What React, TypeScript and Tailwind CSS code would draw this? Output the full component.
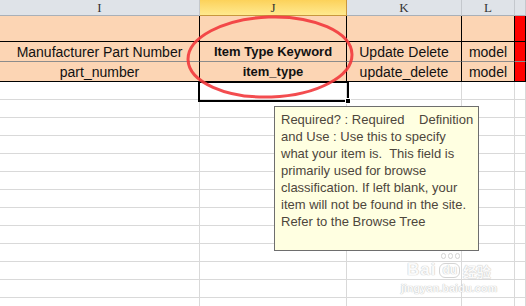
import React from 'react'

const cols = ['I', 'J', 'K', 'L', '']
const colW = ['w-[200px]', 'w-[147px]', 'w-[115px]', 'w-[53px]', 'w-[11px]']

const dataRows = [
  ['Manufacturer Part Number', 'Item Type Keyword', 'Update Delete', 'model'],
  ['part_number', 'item_type', 'update_delete', 'model'],
]

const tipLines = [
  'Required? : Required\u00a0\u00a0\u00a0 Definition',
  'and Use : Use this to specify',
  'what your item is.\u00a0 This field is',
  'primarily used for browse',
  'classification. If left blank, your',
  'item will not be found in the site.',
  'Refer to the Browse Tree',
]

export default function App() {
  return (
    <div className="relative w-[526px] h-[306px] overflow-hidden bg-white font-['Liberation_Sans',sans-serif]">
      {/* column headers */}
      <div className="flex h-[16px]">
        {cols.map((c, i) => (
          <div
            key={i}
            className={
              colW[i] +
              ' shrink-0 flex items-center justify-center text-[13px] text-[#333] font-["Liberation_Serif",serif] border-b ' +
              (i === 1
                ? 'bg-gradient-to-b from-[#fcd25a] to-[#ffe98e] border-[#c8963e] border-r'
                : 'bg-[#dfe3e8] border-[#a9b0b8] border-r border-r-[#c4c8cd]')
            }
          >
            {c}
          </div>
        ))}
      </div>

      {/* empty peach row */}
      <div className="flex h-[26px]">
        {cols.map((_, i) => (
          <div
            key={i}
            className={colW[i] + ' shrink-0 border-b border-r border-black ' + (i === 4 ? 'bg-[#ff0000]' : 'bg-[#fcd5b4]')}
          />
        ))}
      </div>

      {/* data rows */}
      {dataRows.map((row, r) => (
        <div key={r} className="flex h-[20px]">
          {cols.map((_, i) => (
            <div
              key={i}
              className={
                colW[i] +
                ' shrink-0 flex items-end justify-center leading-[18px] border-r border-r-black border-b text-[#111] ' +
                (r === 0 ? 'border-b-[#8c8c8c] ' : 'border-b-black ') +
                (i === 4 ? 'bg-[#ff0000]' : 'bg-[#fcd5b4]') +
                (i === 1 ? ' font-bold text-[13px]' : ' text-[14px]')
              }
            >
              {row[i]}
            </div>
          ))}
        </div>
      ))}

      {/* empty white rows */}
      {Array.from({ length: 13 }).map((_, r) => (
        <div key={r} className="flex h-[18px]">
          {cols.map((_, i) => (
            <div key={i} className={colW[i] + ' shrink-0 border-b border-r border-[#d9d9d9]'} />
          ))}
        </div>
      ))}

      {/* selected cell J4 */}
      <div className="absolute left-[198px] top-[81px] w-[151px] h-[21px] border-2 border-black" />
      <div className="absolute left-[345px] top-[98px] w-[6px] h-[6px] bg-black border border-white" />

      {/* red ellipse annotation */}
      <svg className="absolute left-0 top-0" width="526" height="306">
        <ellipse cx="270" cy="57" rx="82" ry="40" fill="none" stroke="#f2383c" strokeWidth="3" opacity="0.9" transform="rotate(-2 270 57)" />
      </svg>

      {/* comment box */}
      <div className="absolute left-[274px] top-[106px] w-[205px] h-[145px] bg-[#ffffe1] border border-[#6e6e6e] pl-[6px] pt-[4px] text-[13px] leading-[17px] text-[#4d463c]">
        {tipLines.map((l, i) => (
          <div key={i} className="whitespace-pre">{l}</div>
        ))}
      </div>

      {/* watermark */}
      <div className="absolute left-[402px] top-[261px] w-[94px] flex flex-col items-center text-[#fafafa] [text-shadow:0_0_1px_#c4c4c4,0_0_1px_#c4c4c4]">
        <div className="flex items-end gap-[3px] leading-none">
          <span className="text-[17px] font-bold tracking-[1px]">Bai</span>
          <span className="relative text-[12px] font-bold rounded-[6px] border border-[#d4d4d4] px-[2px] leading-[13px]">
            du
            <span className="absolute -top-[11px] left-[1px] flex gap-[2px]">
              <span className="w-[5px] h-[6px] rounded-full border border-[#d4d4d4]" />
              <span className="w-[5px] h-[6px] rounded-full border border-[#d4d4d4]" />
              <span className="w-[5px] h-[6px] rounded-full border border-[#d4d4d4]" />
            </span>
          </span>
          <span className="text-[14px] font-bold font-['Noto_Sans_CJK_SC',sans-serif]">经验</span>
        </div>
        <div className="text-[11px] font-bold mt-[5px] leading-none">jingyan.baidu.com</div>
      </div>
    </div>
  )
}
